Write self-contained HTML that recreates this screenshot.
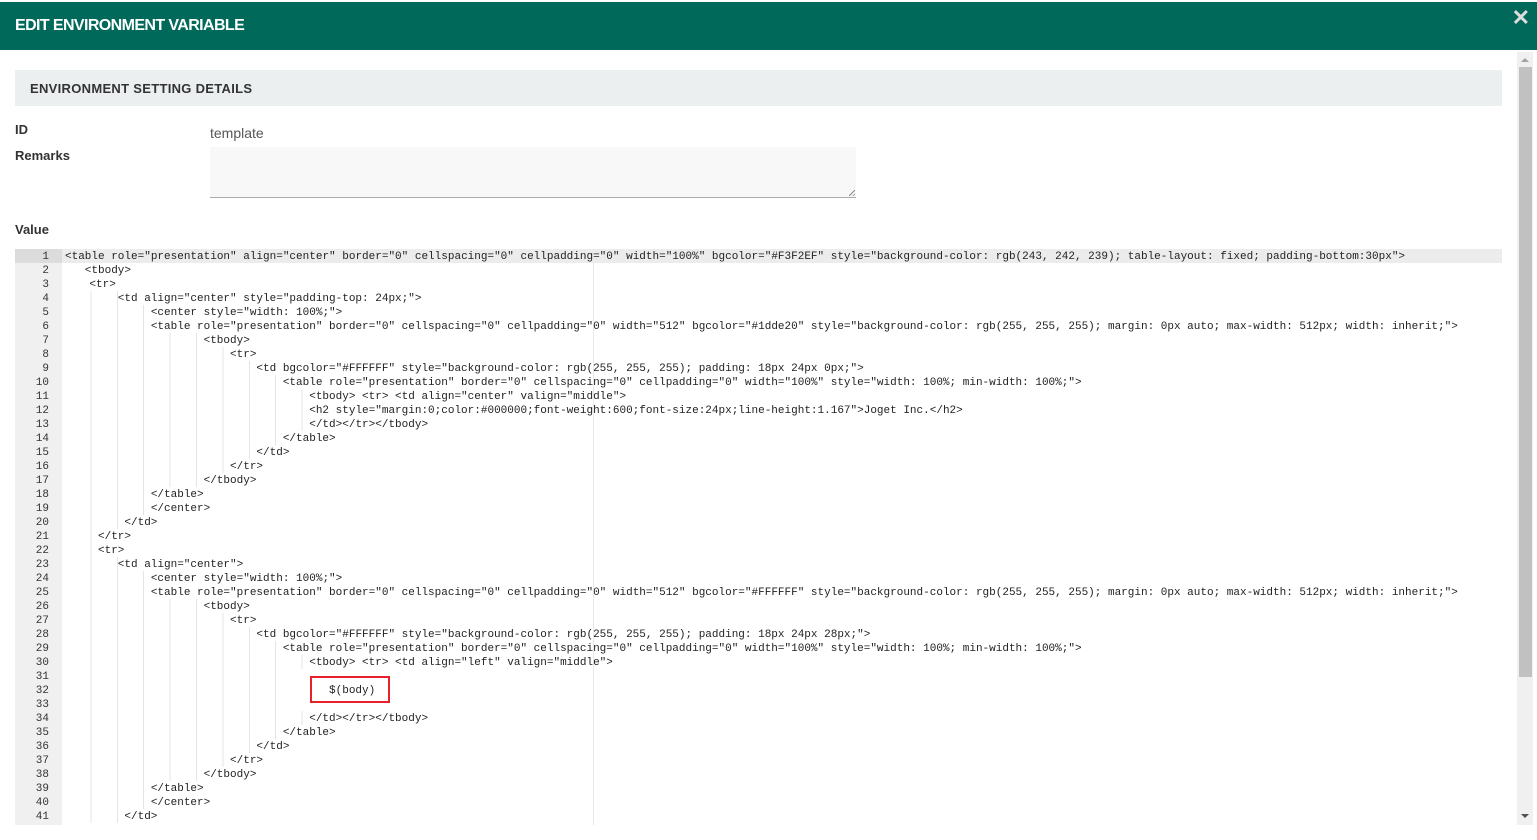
<!DOCTYPE html>
<html><head><meta charset="utf-8">
<style>
*{box-sizing:border-box;margin:0;padding:0}
html,body{width:1537px;height:840px;overflow:hidden;background:#fff;font-family:"Liberation Sans",Arial,sans-serif}
.hdr{position:absolute;left:0;top:2px;width:1537px;height:48px;background:#01695a}
.hdr h1{position:absolute;left:15px;top:15px;color:#fff;font-size:16px;font-weight:bold;letter-spacing:-0.6px}
.x{position:absolute;right:7px;top:3px;color:#ddd;font-size:22px;font-weight:bold}
.sec{position:absolute;left:15px;top:70px;width:1487px;height:36px;background:#eceff0}
.sec span{position:absolute;left:15px;top:11px;font-size:13px;font-weight:bold;color:#333;letter-spacing:0.3px}
.lab{position:absolute;left:15px;font-size:13px;font-weight:bold;color:#333}
.val{position:absolute;left:210px;top:125px;font-size:14px;color:#555}
.ta{position:absolute;left:210px;top:147px;width:646px;height:51px;background:#f8f8f8;border-bottom:1px solid #aaa}
.ta:after{content:"";position:absolute;right:1px;bottom:1px;width:6px;height:6px;background:linear-gradient(135deg,transparent 45%,#888 45%,#888 55%,transparent 55%,transparent 75%,#888 75%,#888 85%,transparent 85%)}
.ed{position:absolute;left:15px;top:249px;width:1487px;height:576px;overflow:hidden}
.gut{position:absolute;left:0;top:0;width:47px;height:576px;background:#f0f0f0}
.gut div{height:14px;line-height:17px;font-family:"Liberation Mono",monospace;font-size:11px;color:#333;text-align:right;padding-right:13px;overflow:visible}
.gut div.a{background:#dcdcdc}
.code{position:absolute;left:50px;top:0;width:1437px}
.l{height:14px;line-height:17px;font-family:"Liberation Mono",monospace;font-size:11px;color:#222;white-space:pre;overflow:visible}
.l.a{background:#ececec;margin-left:-3px;padding-left:3px}
.i{display:inline-block;height:14px;vertical-align:top;background:repeating-linear-gradient(to right,transparent 0,transparent calc(4ch - 1px),#e4e4e4 calc(4ch - 1px),#e4e4e4 4ch)}
.pm{position:absolute;left:578px;top:0;width:1px;height:576px;background:#e8e8e8}
.red{position:absolute;left:295px;top:427px;width:80px;height:27px;border:2px solid #e8202a}
.sb{position:absolute;left:1517px;top:52px;width:16px;height:773px;background:#f0f0f0}
.th{position:absolute;left:2px;top:15px;width:13px;height:610px;background:#c1c1c1}
.up{position:absolute;left:4px;top:6px;border-left:4px solid transparent;border-right:4px solid transparent;border-bottom:4px solid #a3a3a3}
.dn{position:absolute;left:4px;top:762px;border-left:4px solid transparent;border-right:4px solid transparent;border-top:4px solid #505050}
</style></head><body>
<div class="hdr"><h1>EDIT ENVIRONMENT VARIABLE</h1><div class="x">✕</div></div>
<div class="sec"><span>ENVIRONMENT SETTING DETAILS</span></div>
<div class="lab" style="top:122px">ID</div>
<div class="val">template</div>
<div class="lab" style="top:148px">Remarks</div>
<div class="ta"></div>
<div class="lab" style="top:222px">Value</div>
<div class="ed">
<div class="gut">
<div class="a">1</div><div>2</div><div>3</div><div>4</div><div>5</div><div>6</div><div>7</div><div>8</div><div>9</div><div>10</div><div>11</div><div>12</div><div>13</div><div>14</div><div>15</div><div>16</div><div>17</div><div>18</div><div>19</div><div>20</div><div>21</div><div>22</div><div>23</div><div>24</div><div>25</div><div>26</div><div>27</div><div>28</div><div>29</div><div>30</div><div>31</div><div>32</div><div>33</div><div>34</div><div>35</div><div>36</div><div>37</div><div>38</div><div>39</div><div>40</div><div>41</div>
</div>
<div class="pm"></div>
<div class="code">
<div class="l a">&lt;table role="presentation" align="center" border="0" cellspacing="0" cellpadding="0" width="100%" bgcolor="#F3F2EF" style="background-color: rgb(243, 242, 239); table-layout: fixed; padding-bottom:30px"&gt;</div>
<div class="l"><span class="i" style="width:3ch"></span>&lt;tbody&gt;</div>
<div class="l"><span class="i" style="width:calc(4ch - 2px)"></span>&lt;tr&gt;</div>
<div class="l"><span class="i" style="width:8ch"></span>&lt;td align="center" style="padding-top: 24px;"&gt;</div>
<div class="l"><span class="i" style="width:13ch"></span>&lt;center style="width: 100%;"&gt;</div>
<div class="l"><span class="i" style="width:13ch"></span>&lt;table role="presentation" border="0" cellspacing="0" cellpadding="0" width="512" bgcolor="#1dde20" style="background-color: rgb(255, 255, 255); margin: 0px auto; max-width: 512px; width: inherit;"&gt;</div>
<div class="l"><span class="i" style="width:21ch"></span>&lt;tbody&gt;</div>
<div class="l"><span class="i" style="width:25ch"></span>&lt;tr&gt;</div>
<div class="l"><span class="i" style="width:29ch"></span>&lt;td bgcolor="#FFFFFF" style="background-color: rgb(255, 255, 255); padding: 18px 24px 0px;"&gt;</div>
<div class="l"><span class="i" style="width:33ch"></span>&lt;table role="presentation" border="0" cellspacing="0" cellpadding="0" width="100%" style="width: 100%; min-width: 100%;"&gt;</div>
<div class="l"><span class="i" style="width:37ch"></span>&lt;tbody&gt; &lt;tr&gt; &lt;td align="center" valign="middle"&gt;</div>
<div class="l"><span class="i" style="width:37ch"></span>&lt;h2 style="margin:0;color:#000000;font-weight:600;font-size:24px;line-height:1.167"&gt;Joget Inc.&lt;/h2&gt;</div>
<div class="l"><span class="i" style="width:37ch"></span>&lt;/td&gt;&lt;/tr&gt;&lt;/tbody&gt;</div>
<div class="l"><span class="i" style="width:33ch"></span>&lt;/table&gt;</div>
<div class="l"><span class="i" style="width:29ch"></span>&lt;/td&gt;</div>
<div class="l"><span class="i" style="width:25ch"></span>&lt;/tr&gt;</div>
<div class="l"><span class="i" style="width:21ch"></span>&lt;/tbody&gt;</div>
<div class="l"><span class="i" style="width:13ch"></span>&lt;/table&gt;</div>
<div class="l"><span class="i" style="width:13ch"></span>&lt;/center&gt;</div>
<div class="l"><span class="i" style="width:9ch"></span>&lt;/td&gt;</div>
<div class="l"><span class="i" style="width:5ch"></span>&lt;/tr&gt;</div>
<div class="l"><span class="i" style="width:5ch"></span>&lt;tr&gt;</div>
<div class="l"><span class="i" style="width:8ch"></span>&lt;td align="center"&gt;</div>
<div class="l"><span class="i" style="width:13ch"></span>&lt;center style="width: 100%;"&gt;</div>
<div class="l"><span class="i" style="width:13ch"></span>&lt;table role="presentation" border="0" cellspacing="0" cellpadding="0" width="512" bgcolor="#FFFFFF" style="background-color: rgb(255, 255, 255); margin: 0px auto; max-width: 512px; width: inherit;"&gt;</div>
<div class="l"><span class="i" style="width:21ch"></span>&lt;tbody&gt;</div>
<div class="l"><span class="i" style="width:25ch"></span>&lt;tr&gt;</div>
<div class="l"><span class="i" style="width:29ch"></span>&lt;td bgcolor="#FFFFFF" style="background-color: rgb(255, 255, 255); padding: 18px 24px 28px;"&gt;</div>
<div class="l"><span class="i" style="width:33ch"></span>&lt;table role="presentation" border="0" cellspacing="0" cellpadding="0" width="100%" style="width: 100%; min-width: 100%;"&gt;</div>
<div class="l"><span class="i" style="width:37ch"></span>&lt;tbody&gt; &lt;tr&gt; &lt;td align="left" valign="middle"&gt;</div>
<div class="l"><span class="i" style="width:34ch"></span></div>
<div class="l"><span class="i" style="width:34ch"></span>      $(body)</div>
<div class="l"><span class="i" style="width:34ch"></span></div>
<div class="l"><span class="i" style="width:37ch"></span>&lt;/td&gt;&lt;/tr&gt;&lt;/tbody&gt;</div>
<div class="l"><span class="i" style="width:33ch"></span>&lt;/table&gt;</div>
<div class="l"><span class="i" style="width:29ch"></span>&lt;/td&gt;</div>
<div class="l"><span class="i" style="width:25ch"></span>&lt;/tr&gt;</div>
<div class="l"><span class="i" style="width:21ch"></span>&lt;/tbody&gt;</div>
<div class="l"><span class="i" style="width:13ch"></span>&lt;/table&gt;</div>
<div class="l"><span class="i" style="width:13ch"></span>&lt;/center&gt;</div>
<div class="l"><span class="i" style="width:9ch"></span>&lt;/td&gt;</div>
</div>
<div class="red"></div>
</div>
<div class="sb"><div class="up"></div><div class="th"></div><div class="dn"></div></div>
</body></html>
